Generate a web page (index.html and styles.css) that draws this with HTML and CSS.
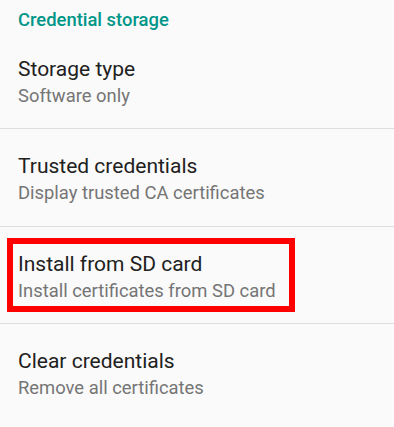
FILE: index.html
```html
<!DOCTYPE html>
<html lang="en">

<head>
    <meta charset="UTF-8">
    <title>Credential storage</title>
    <link rel="stylesheet" href="styles.css">
</head>

<body>
    <div class="settings">
        <div class="category">Credential storage</div>

        <div class="pref">
            <div class="pref-title">Storage type</div>
            <div class="pref-summary">Software only</div>
        </div>

        <div class="pref">
            <div class="pref-title">Trusted credentials</div>
            <div class="pref-summary">Display trusted CA certificates</div>
        </div>

        <div class="pref">
            <div class="pref-title">Install from SD card</div>
            <div class="pref-summary">Install certificates from SD card</div>
            <div class="highlight"></div>
        </div>

        <div class="pref last">
            <div class="pref-title">Clear credentials</div>
            <div class="pref-summary">Remove all certificates</div>
        </div>
    </div>
</body>

</html>
```

FILE: styles.css
```css
body {
    font-family: Roboto, "Noto Sans", sans-serif;
    background-color: #fafafa;
    margin: 0;
}

.settings {
    display: flex;
    flex-direction: column;
}

.category {
    color: #009688;
    font-size: 18.4px;
    font-weight: 500;
    line-height: 23px;
    padding: 8px 18px 0;
    height: 23.5px;
}

.pref {
    position: relative;
    padding: 24px 18px 21px;
    border-bottom: 1px solid #dedede;
}

.pref.last {
    border-bottom: none;
}

.pref-title {
    color: #212121;
    font-size: 21px;
    line-height: 26px;
}

.pref-summary {
    color: #757575;
    font-size: 18.4px;
    line-height: 22.5px;
    margin-top: 3px;
}

.highlight {
    position: absolute;
    top: 11px;
    left: 7px;
    width: 276px;
    height: 62px;
    border: 6px solid #ff0000;
    pointer-events: none;
}
```
